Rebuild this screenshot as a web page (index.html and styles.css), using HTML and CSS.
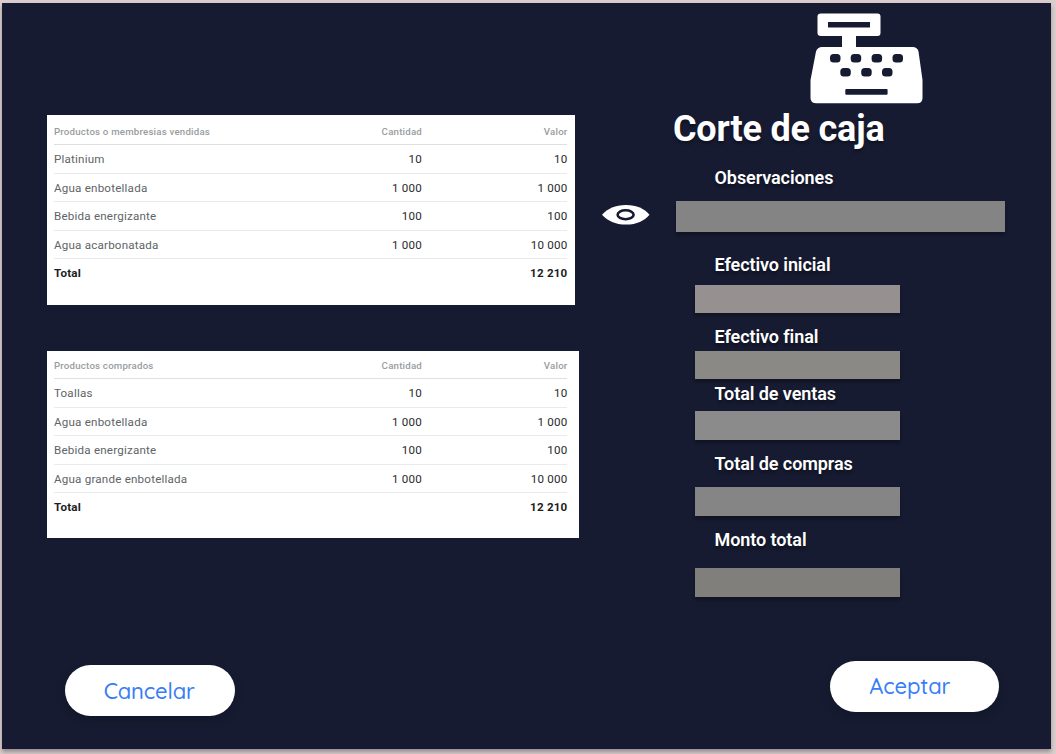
FILE: index.html
```html
<!DOCTYPE html>
<html lang="es">
<head>
<meta charset="utf-8">
<title>Corte de caja</title>
<link rel="stylesheet" href="styles.css">
</head>
<body>
<main class="panel">
  <div class="content">
    <section class="reports">
      <div class="card card-sold">
        <table class="report">
          <thead><tr><th>Productos o membresias vendidas</th><th class="num">Cantidad</th><th class="num">Valor</th></tr></thead>
          <tbody>
            <tr><td>Platinium</td><td class="num">10</td><td class="num">10</td></tr>
            <tr><td>Agua enbotellada</td><td class="num">1 000</td><td class="num">1 000</td></tr>
            <tr><td>Bebida energizante</td><td class="num">100</td><td class="num">100</td></tr>
            <tr><td>Agua acarbonatada</td><td class="num">1 000</td><td class="num">10 000</td></tr>
            <tr class="total"><td>Total</td><td></td><td class="num">12 210</td></tr>
          </tbody>
        </table>
      </div>
      <div class="card card-bought">
        <table class="report">
          <thead><tr><th>Productos comprados</th><th class="num">Cantidad</th><th class="num">Valor</th></tr></thead>
          <tbody>
            <tr><td>Toallas</td><td class="num">10</td><td class="num">10</td></tr>
            <tr><td>Agua enbotellada</td><td class="num">1 000</td><td class="num">1 000</td></tr>
            <tr><td>Bebida energizante</td><td class="num">100</td><td class="num">100</td></tr>
            <tr><td>Agua grande enbotellada</td><td class="num">1 000</td><td class="num">10 000</td></tr>
            <tr class="total"><td>Total</td><td></td><td class="num">12 210</td></tr>
          </tbody>
        </table>
      </div>
    </section>
    <section class="summary">
      <svg class="register" width="114" height="92" viewBox="0 0 114 92">
        <path fill="#fff" fill-rule="evenodd" d="M11 .5H67.500Q70.500 .5 70.500 3.500V20Q70.500 23 67.500 23H46V34H102.500Q107.500 34 108.500 38.500L112.500 67V85Q112.500 90.300 107 90.300H6.500Q.5 90.300 .5 85V67L6 38.500Q7.500 34 12 34H32V23H11Q7.500 23 7.500 20V3.500Q7.500 .5 11 .5ZM18 9V14.500H60V9Z"/>
        <g fill="#171b31">
          <rect x="20" y="41" width="10.500" height="8.500" rx="3.500"/><rect x="40.700" y="41" width="10.500" height="8.500" rx="3.500"/><rect x="61.600" y="41" width="10.500" height="8.500" rx="3.500"/><rect x="82.500" y="41" width="10.500" height="8.500" rx="3.500"/>
          <rect x="30.300" y="55" width="10.500" height="8.500" rx="3.500"/><rect x="51.200" y="55" width="10.500" height="8.500" rx="3.500"/><rect x="72" y="55" width="10.500" height="8.500" rx="3.500"/>
          <rect x="35.300" y="76" width="42.300" height="5.700" rx="1"/>
        </g>
      </svg>
      <h1 class="title">Corte de caja</h1>
      <label class="label">Observaciones</label>
      <div class="notes">
        <svg class="eye" width="48" height="20" viewBox="0 0 48 20">
          <path fill="#fff" d="M0 9.800C6 3.500 13 0 24 0S42 3.500 47.500 9.800C42 16 35 19.600 24 19.600S6 16 0 9.800Z"/>
          <ellipse cx="23.600" cy="9.700" rx="8" ry="4.500" fill="#fff" stroke="#171b31" stroke-width="2.600"/>
        </svg>
        <div class="field field-notes"></div>
      </div>
      <label class="label">Efectivo inicial</label>
      <div class="field field-initial"></div>
      <label class="label">Efectivo final</label>
      <div class="field field-final"></div>
      <label class="label">Total de ventas</label>
      <div class="field field-sales"></div>
      <label class="label">Total de compras</label>
      <div class="field field-purchases"></div>
      <label class="label">Monto total</label>
      <div class="field field-amount"></div>
    </section>
  </div>
  <footer class="actions">
    <button class="button cancel">Cancelar</button>
    <button class="button accept">Aceptar</button>
  </footer>
</main>
</body>
</html>
```

FILE: styles.css
```css
* { box-sizing: border-box; }
body {
  margin: 0;
  padding: 3px 5px 5px 2px;
  height: 754px;
  overflow: hidden;
  background: #dbcdce;
  font-family: Roboto, sans-serif;
}
.panel {
  height: 746px;
  background: #171b31;
  box-shadow: 0 3px 4px rgba(0, 0, 0, .3);
}
.content {
  display: grid;
  grid-template-columns: 600px 1fr;
  height: 658px;
}
.reports { padding: 111.500px 0 0 45.400px; }
.card { background: #fff; padding-left: 6.600px; }
.card-sold { width: 528px; height: 190.500px; padding-top: 2.800px; margin-bottom: 46px; }
.card-bought { width: 531.500px; height: 187px; padding-top: .3px; }
.report {
  width: 513.500px;
  table-layout: fixed;
  border-collapse: separate;
  border-spacing: 0;
  font-size: 11.600px;
  letter-spacing: .21px;
}
.report th, .report td {
  height: 28.400px;
  padding: 0;
  text-align: left;
  line-height: 14px;
  color: #606467;
  border-bottom: 1px solid #e8eaeb;
}
.report tbody tr:first-child td { height: 29.200px; }
.report th {
  height: 27.600px;
  padding-top: 2px;
  font-size: 9.700px;
  font-weight: 500;
  letter-spacing: .2px;
  color: #989c9f;
  border-bottom-color: #dddfe0;
}
.report th:first-child { width: 242px; }
.report th:nth-child(2) { width: 126px; }
.report .num { text-align: right; }
.report td.num { color: #27292b; }
.report .total td {
  color: #1c1d1f;
  font-weight: 700;
  border-bottom: 0;
}
.summary { display: flex; flex-direction: column; align-items: flex-start; }
.register { margin: 10px 0 0 208px; flex: none; }
.title {
  margin: 2.500px 0 17px 71px;
  font-size: 36px;
  line-height: 42px;
  font-weight: 700;
  letter-spacing: -.18px;
  color: #fff;
  text-shadow: 0 3px 3px rgba(0, 0, 0, .3);
}
.label {
  margin-left: 112.500px;
  font-size: 18px;
  line-height: 21px;
  font-weight: 600;
  letter-spacing: -.08px;
  color: #fff;
  text-shadow: 0 3px 3px rgba(0, 0, 0, .35);
}
.notes { display: flex; gap: 26px; margin: 13px 0 21.500px; }
.eye { margin-top: 4px; }
.field {
  width: 205.500px;
  height: 28.500px;
  margin-left: 92.700px;
  flex: none;
  box-shadow: 0 3px 3px rgba(0, 0, 0, .3);
}
.field-notes { width: 329px; height: 31.500px; margin-left: 0; background: #848484; }
.field-initial { margin-top: 10px; margin-bottom: 13px; background: #969190; }
.field-final { margin-top: 3.500px; margin-bottom: 4px; background: #8a8985; }
.field-sales { margin-top: 7px; margin-bottom: 13.500px; background: #8b8b8b; }
.field-purchases { margin-top: 13px; margin-bottom: 13.500px; background: #858585; }
.field-amount { margin-top: 18px; background: #807f7c; }
.actions {
  display: flex;
  justify-content: space-between;
  padding: 0 52px 0 63px;
}
.button {
  width: 169.500px;
  height: 50.500px;
  padding: 1px 1px 0 0;
  border: 0;
  border-radius: 26px;
  background: #fff;
  color: #387df6;
  font: 500 22px/28px Quicksand, Lato, sans-serif;
  letter-spacing: -.15px;
  box-shadow: 0 4px 8px rgba(0, 15, 25, .3);
}
.cancel { margin-top: 4px; }
.accept { padding: 0 9px 0 0; }
```
